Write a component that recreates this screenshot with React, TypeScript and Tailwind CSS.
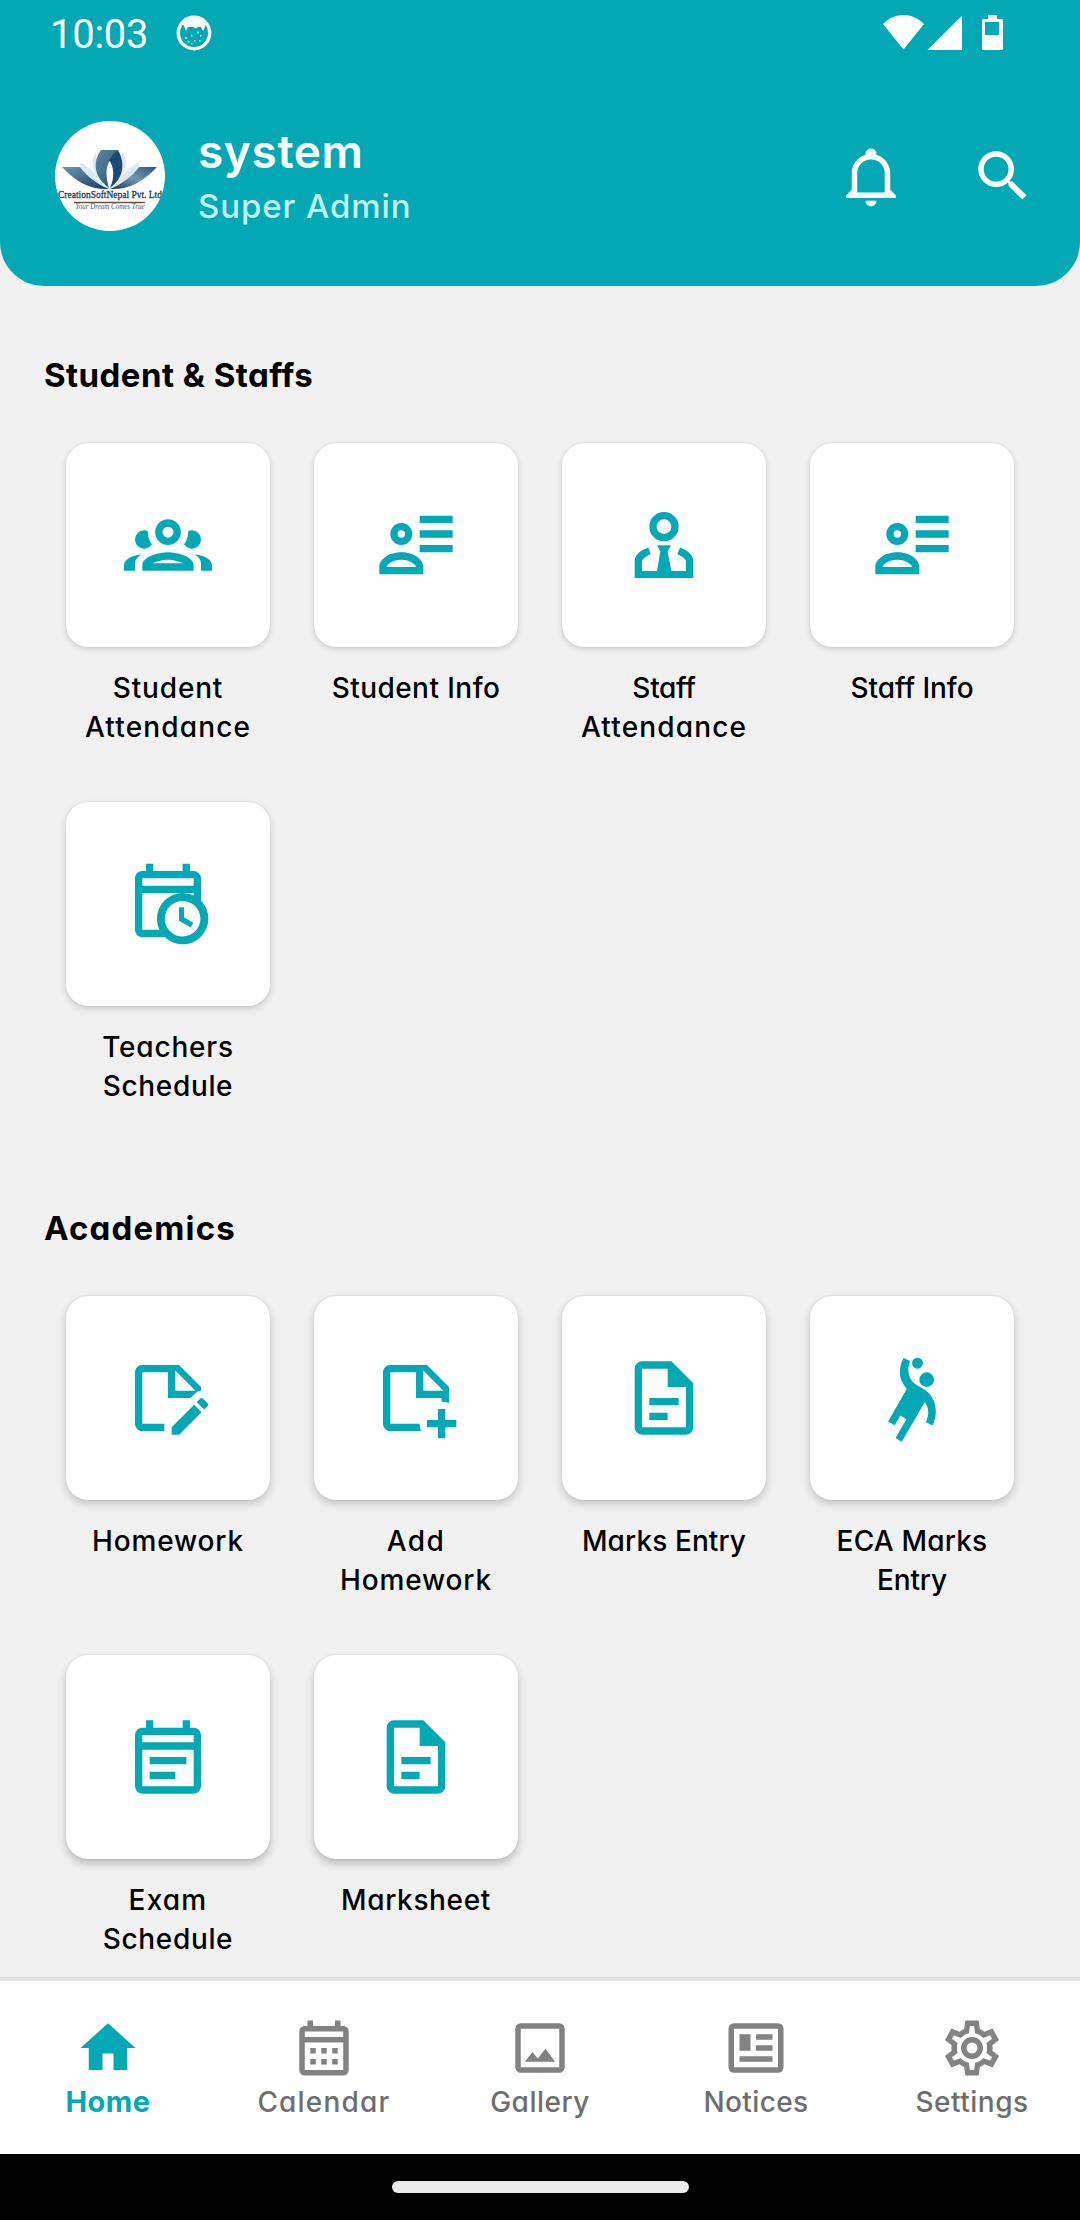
const icons = {
  accountGroup:
    "M12,5A3.5,3.5 0 0,0 8.5,8.5A3.5,3.5 0 0,0 12,12A3.5,3.5 0 0,0 15.5,8.5A3.5,3.5 0 0,0 12,5M12,7A1.5,1.5 0 0,1 13.5,8.5A1.5,1.5 0 0,1 12,10A1.5,1.5 0 0,1 10.5,8.5A1.5,1.5 0 0,1 12,7M5.5,8A2.5,2.5 0 0,0 3,10.5C3,11.44 3.53,12.25 4.29,12.68C4.65,12.88 5.06,13 5.5,13C5.94,13 6.35,12.88 6.71,12.68C7.08,12.47 7.39,12.17 7.62,11.81C6.89,10.86 6.5,9.7 6.5,8.5C6.5,8.41 6.5,8.31 6.5,8.22C6.2,8.08 5.86,8 5.5,8M18.5,8C18.14,8 17.8,8.08 17.5,8.22C17.5,8.31 17.5,8.41 17.5,8.5C17.5,9.7 17.11,10.86 16.38,11.81C16.5,12 16.63,12.15 16.78,12.3C16.94,12.45 17.1,12.58 17.29,12.68C17.65,12.88 18.06,13 18.5,13C18.94,13 19.35,12.88 19.71,12.68C20.47,12.25 21,11.44 21,10.5A2.5,2.5 0 0,0 18.5,8M12,14C9.66,14 5,15.17 5,17.5V19H19V17.5C19,15.17 14.34,14 12,14M4.71,14.55C2.78,14.78 0,15.76 0,17.5V19H3V17.07C3,16.06 3.69,15.22 4.71,14.55M19.29,14.55C20.31,15.22 21,16.06 21,17.07V19H24V17.5C24,15.76 21.22,14.78 19.29,14.55M12,16C13.53,16 15.24,16.5 16.23,17H7.77C8.76,16.5 10.47,16 12,16Z",
  accountDetails:
    "M13 4H22V6H13V4M13 8H22V10H13V8M13 12H22V14H13V12M8 6A3 3 0 0 0 8 12A3 3 0 0 0 8 6M8 8A1 1 0 0 1 8 10A1 1 0 0 1 8 8M8 14C4.67 14 2 15.9 2 18V20H14V18C14 15.9 11.33 14 8 14M4 18C4 17.42 5.6 16 8 16S12 17.42 12 18H4Z",
  accountTie:
    "M12 3A4 4 0 0 0 12 11A4 4 0 0 0 12 3M12 5A2 2 0 0 1 12 9A2 2 0 0 1 12 5M10.1 12.1H13.9L13 13.8L14 19.1H18V16.5C18 15.9 17.1 15.1 15.6 14.5L16.4 12.7C18.5 13.5 20 14.9 20 16.2V21H4V16.2C4 14.9 5.5 13.5 7.7 12.7L8.4 14.5C6.9 15.1 6 15.9 6 16.5V19.1H10.1L11 13.8Z",
  calendarClock:
    "M15 12.9H16.4V15.7L18.9 17.1L18.2 18.4L15 16.6V12.9M5 9V19H9.67C9.24 18.09 9 17.07 9 16A7 7 0 0 1 16 9H5M16 9C17.07 9 18.09 9.24 19 9.67V9H16M5 5V7H19V5H5M5 21C3.89 21 3 20.1 3 19V5C3 3.89 3.89 3 5 3H6V1H8V3H16V1H18V3H19A2 2 0 0 1 21 5V11.1C22.24 12.36 23 14.09 23 16A7 7 0 0 1 16 23C14.09 23 12.36 22.24 11.1 21H5M16 11.15A4.85 4.85 0 0 0 11.15 16C11.15 18.68 13.32 20.85 16 20.85A4.85 4.85 0 0 0 20.85 16C20.85 13.32 18.68 11.15 16 11.15Z",
  noteEdit:
    "M18.13 12L19.39 10.74C19.83 10.3 20.39 10.06 21 10V9L15 3H5C3.89 3 3 3.89 3 5V19C3 20.1 3.89 21 5 21H11V19.13L11.13 19H5V5H12V12H18.13M14 4.5L19.5 10H14V4.5M19.13 13.83L21.17 15.87L15.04 22H13V19.96L19.13 13.83M22.85 14.19L21.87 15.17L19.83 13.13L20.81 12.15C21 11.95 21.33 11.95 21.53 12.15L22.85 13.47C23.05 13.67 23.05 14 22.85 14.19Z",
  notePlus:
    "M19 13C19.7 13 20.37 13.13 21 13.35V9L15 3H5C3.89 3 3 3.89 3 5V19C3 20.11 3.9 21 5 21H13.35C13.13 20.37 13 19.7 13 19H5V5H12V12H19V13M14 4.5L19.5 10H14V4.5M20 15V18H23V20H20V23H18V20H15V18H18V15H20Z",
  document:
    "M6 2A2 2 0 0 0 4 4V20A2 2 0 0 0 6 22H18A2 2 0 0 0 20 20V8L14 2H6M6 4H13V9H18V20H6V4M8 12V14H16V12H8M8 16V18H13V16H8Z",
  handball:
    "M13.5 1A1.5 1.5 0 0 1 13.5 4A1.5 1.5 0 0 1 13.5 1M16 5A2 2 0 0 1 16 9A2 2 0 0 1 16 5M9.7 1.1L11.5 1.9C11.1 2.8 11 3.6 11 4.5C11.1 6.8 12.3 8.1 14.6 9.2C17.1 10.5 18.5 12.8 18.5 15.6C18.5 17 18.2 18.3 17.6 19.5L15.8 18.6C16.7 16.7 16.7 15 15.5 13.1L9.2 23.9L7.5 22.9L10.5 17.8L8.8 16.8L7.3 19.4L5.5 18.4L10.6 9.5C9.3 8.1 8.7 6.7 8.7 4.8C8.7 3.5 9.1 2.2 9.7 1.1Z",
  calendarText:
    "M19 4H18V2H16V4H8V2H6V4H5A2 2 0 0 0 3 6V20A2 2 0 0 0 5 22H19A2 2 0 0 0 21 20V6A2 2 0 0 0 19 4M19 20H5V10H19V20M19 8H5V6H19V8M7 12H17V14H7V12M7 16H14V18H7V16Z",
  bell:
    "M10 21H14C14 22.1 13.1 23 12 23S10 22.1 10 21M21 19V20H3V19L5 17V11C5 7.9 7 5.2 10 4.3V4C10 2.9 10.9 2 12 2S14 2.9 14 4V4.3C17 5.2 19 7.9 19 11V17L21 19M17 11C17 8.2 14.8 6 12 6S7 8.2 7 11V18H17V11Z",
  magnify:
    "M9.5,3A6.5,6.5 0 0,1 16,9.5C16,11.11 15.41,12.59 14.44,13.73L14.71,14H15.5L20.5,19L19,20.5L14,15.5V14.71L13.73,14.44C12.59,15.41 11.11,16 9.5,16A6.5,6.5 0 0,1 3,9.5A6.5,6.5 0 0,1 9.5,3M9.5,5C7,5 5,7 5,9.5C5,12 7,14 9.5,14C12,14 14,12 14,9.5C14,7 12,5 9.5,5Z",
  home: "M10,20V14H14V20H19V12H22L12,3L2,12H5V20H10Z",
  calendarMonth:
    "M19 4H18V2H16V4H8V2H6V4H5A2 2 0 0 0 3 6V20A2 2 0 0 0 5 22H19A2 2 0 0 0 21 20V6A2 2 0 0 0 19 4M19 20H5V10H19V20M19 8H5V6H19V8M7 12H9V14H7V12M11 12H13V14H11V12M15 12H17V14H15V12M7 16H9V18H7V16M11 16H13V18H11V16M15 16H17V18H15V16Z",
  image:
    "M19,19H5V5H19M19,3H5A2,2 0 0,0 3,5V19A2,2 0 0,0 5,21H19A2,2 0 0,0 21,19V5A2,2 0 0,0 19,3M13.96,12.29L11.21,15.83L9.25,13.47L6.5,17H17.5L13.96,12.29Z",
  newspaper:
    "M4 3A2 2 0 0 0 2 5V19A2 2 0 0 0 4 21H20A2 2 0 0 0 22 19V5A2 2 0 0 0 20 3H4M4 5H20V19H4V5M6 7V13H10V7H6M12 7V9H18V7H12M12 11V13H18V11H12M6 15V17H18V15H6Z",
  cog:
    "M12,8A4,4 0 0,1 16,12A4,4 0 0,1 12,16A4,4 0 0,1 8,12A4,4 0 0,1 12,8M12,10A2,2 0 0,0 10,12A2,2 0 0,0 12,14A2,2 0 0,0 14,12A2,2 0 0,0 12,10M9.6,22L9.13,18.93C8.5,18.68 7.96,18.34 7.44,17.94L4.55,19.1L2.15,14.95L4.57,12.97L4.5,12L4.57,11L2.15,9.05L4.55,4.9L7.44,6.05C7.96,5.66 8.5,5.32 9.13,5.07L9.6,2H14.4L14.87,5.07C15.5,5.32 16.04,5.66 16.56,6.05L19.45,4.9L21.85,9.05L19.43,11L19.5,12L19.43,13L21.85,14.95L19.45,19.1L16.56,17.95C16.04,18.34 15.5,18.68 14.87,18.93L14.4,22H9.6M11.25,4L10.88,6.61C9.68,6.86 8.62,7.5 7.85,8.39L5.44,7.35L4.69,8.65L6.8,10.2C6.4,11.37 6.4,12.64 6.8,13.8L4.68,15.36L5.43,16.66L7.86,15.62C8.63,16.5 9.68,17.14 10.87,17.38L11.24,20H12.76L13.13,17.39C14.32,17.14 15.37,16.5 16.14,15.62L18.57,16.66L19.32,15.36L17.2,13.81C17.6,12.64 17.6,11.37 17.2,10.2L19.31,8.65L18.56,7.35L16.15,8.39C15.38,7.5 14.32,6.86 13.12,6.62L12.75,4H11.25Z",
};

type IconName = keyof typeof icons;
type Line = { text: string; tracking: string };
type Tile = { icon: IconName; label: Line[] };
type Section = { title: string; tracking: string; rows: { shadow: string; tiles: Tile[] }[] };

const sections: Section[] = [
  {
    title: "Student & Staffs",
    tracking: "tracking-[0.45px]",
    rows: [
      {
        shadow: "shadow-[0_2px_6px_rgba(0,0,0,0.14),0_0_2px_rgba(0,0,0,0.12)]",
        tiles: [
          { icon: "accountGroup", label: [{ text: "Student", tracking: "tracking-[0.82px]" }, { text: "Attendance", tracking: "tracking-[1.15px]" }] },
          { icon: "accountDetails", label: [{ text: "Student Info", tracking: "tracking-[0.45px]" }] },
          { icon: "accountTie", label: [{ text: "Staff", tracking: "tracking-[-0.3px]" }, { text: "Attendance", tracking: "tracking-[1.15px]" }] },
          { icon: "accountDetails", label: [{ text: "Staff Info", tracking: "tracking-[-0.05px]" }] },
        ],
      },
      {
        shadow: "shadow-[0_3px_7px_rgba(0,0,0,0.17),0_0_2px_rgba(0,0,0,0.12)]",
        tiles: [
          { icon: "calendarClock", label: [{ text: "Teachers", tracking: "tracking-[0.8px]" }, { text: "Schedule", tracking: "tracking-[0.65px]" }] },
        ],
      },
    ],
  },
  {
    title: "Academics",
    tracking: "tracking-[1.15px]",
    rows: [
      {
        shadow: "shadow-[0_4px_8px_rgba(0,0,0,0.19),0_0_2px_rgba(0,0,0,0.12)]",
        tiles: [
          { icon: "noteEdit", label: [{ text: "Homework", tracking: "tracking-[0.82px]" }] },
          { icon: "notePlus", label: [{ text: "Add", tracking: "tracking-[1.5px]" }, { text: "Homework", tracking: "tracking-[0.82px]" }] },
          { icon: "document", label: [{ text: "Marks Entry", tracking: "tracking-[0.1px]" }] },
          { icon: "handball", label: [{ text: "ECA Marks", tracking: "tracking-[0.2px]" }, { text: "Entry", tracking: "tracking-[-0.13px]" }] },
        ],
      },
      {
        shadow: "shadow-[0_5px_9px_rgba(0,0,0,0.22),0_0_2px_rgba(0,0,0,0.12)]",
        tiles: [
          { icon: "calendarText", label: [{ text: "Exam", tracking: "tracking-[1.2px]" }, { text: "Schedule", tracking: "tracking-[0.65px]" }] },
          { icon: "document", label: [{ text: "Marksheet", tracking: "tracking-[0.65px]" }] },
        ],
      },
    ],
  },
];

const tabs: { icon: IconName; label: string; tracking: string; active?: boolean }[] = [
  { icon: "home", label: "Home", tracking: "tracking-[0.5px]", active: true },
  { icon: "calendarMonth", label: "Calendar", tracking: "tracking-[1.2px]" },
  { icon: "image", label: "Gallery", tracking: "tracking-[0.5px]" },
  { icon: "newspaper", label: "Notices", tracking: "tracking-[0.39px]" },
  { icon: "cog", label: "Settings", tracking: "tracking-[0.5px]" },
];

function Icon({ name, className }: { name: IconName; className: string }) {
  return (
    <svg viewBox="0 0 24 24" className={className} fill="currentColor" fillRule="evenodd" aria-hidden="true">
      <path d={icons[name]} />
    </svg>
  );
}

function CompanyLogo() {
  return (
    <svg viewBox="0 0 110 110" className="size-[110px] shrink-0 rounded-full bg-white">
      <defs>
        <linearGradient id="leafLeft" x1="0" y1="0" x2="1" y2="1">
          <stop offset="0" stopColor="#6f97b1" />
          <stop offset="1" stopColor="#17395e" />
        </linearGradient>
        <linearGradient id="leafRight" x1="1" y1="0" x2="0" y2="1">
          <stop offset="0" stopColor="#2b577c" />
          <stop offset="0.5" stopColor="#7196ae" />
          <stop offset="1" stopColor="#17395e" />
        </linearGradient>
        <linearGradient id="petal" x1="0" y1="0" x2="1" y2="1">
          <stop offset="0" stopColor="#5c87a3" />
          <stop offset="1" stopColor="#2a5478" />
        </linearGradient>
      </defs>
      <path d="M24 42C33 43 39 52 54 68C43 63 29 55 24 42M85 42C76 43 70 52 55 68C66 63 80 55 85 42M41 31C35 39 36 52 52 67L42 45M67 31C74 39 73 52 57 67L67 45" fill="#dce9f3" />
      <path d="M7 46H25C31 54 40 62 54 68C34 69 20 60 7 46Z" fill="url(#leafLeft)" />
      <path d="M102 46H84C78 54 69 62 55 68C75 69 89 60 102 46Z" fill="url(#leafRight)" />
      <path d="M46 29H63C55 37 49 49 54 67C41 58 36 43 46 29Z" fill="url(#petal)" />
      <path d="M63 29C71 43 68 58 55 67C60 56 59 46 54 39C57 35 60 31 63 29Z" fill="#1d4a72" />
      <path d="M54.5 40C50 47 51 58 54.5 66C58 58 59 47 54.5 40Z" fill="#fff" />
      <text x="3" y="77" textLength="104" lengthAdjust="spacingAndGlyphs" fill="#17395e" stroke="#17395e" strokeWidth="0.3" className="font-['Liberation_Serif'] text-[11px]">
        CreationSoftNepal Pvt. Ltd
      </text>
      <path d="M19 81.5H90" stroke="#6b5148" strokeWidth="1.3" />
      <text x="20.5" y="88" textLength="69" lengthAdjust="spacingAndGlyphs" fill="#3a587a" className="font-['Liberation_Serif'] text-[7.5px] italic">
        Your Dream Comes True
      </text>
    </svg>
  );
}

function StatusBar() {
  return (
    <div className="flex h-10 items-start pl-[50px] pr-[77px] text-white">
      <span className="font-['Roboto'] text-[40px] leading-10 tracking-[-0.28px]">10:03</span>
      <svg viewBox="0 0 36 36" className="ml-[28px] size-9">
        <circle cx="18" cy="18" r="15.7" fill="none" stroke="currentColor" strokeWidth="3.4" />
        <path d="M6 8C11 1 25 1 30 8L29 12L27 16L25 12H22L20 13.5L17 12H12L10 16L8 11Z" fill="currentColor" />
        <path d="M9 22h2v2H9zM15 20h1.5v1.5H15zM21 16.5h2v2h-2zM24 20h1.5v1.5H24zM12 26h1.5v1.5H12zM18 25h1.5v1.5H18zM15 28h1.5v1.5H15zM23 25h1.5v1.5H23z" fill="currentColor" opacity="0.7" />
      </svg>
      <div className="ml-auto flex" aria-hidden="true">
        <svg viewBox="0 0 41 36" className="h-9 w-[41px]" fill="currentColor">
          <path d="M0 9C12-3 29-3 41 9L20.5 34.5Z" />
        </svg>
        <svg viewBox="0 0 35 36" className="ml-[3px] h-9 w-[35px]" fill="currentColor">
          <path d="M35 .7V35H.5Z" />
        </svg>
        <svg viewBox="0 0 21 36" className="ml-5 h-9 w-[21px]" fill="currentColor" fillRule="evenodd">
          <path d="M6 0H15V4H19.5Q21 4 21 5.5V33.5Q21 35 19.5 35H1.5Q0 35 0 33.5V5.5Q0 4 1.5 4H6ZM3 7V20H17V7Z" />
        </svg>
      </div>
    </div>
  );
}

function Header() {
  return (
    <header className="h-[286px] rounded-b-[44px] bg-[#02a8b3] pt-[15px] text-white">
      <StatusBar />
      <div className="mt-[66px] flex items-start pl-[55px] pr-[44px]">
        <CompanyLogo />
        <div className="ml-[33px] mt-[3px]">
          <h1 className="text-[46px] font-semibold leading-[54px] tracking-[0.6px]">system</h1>
          <p className="mt-1.5 text-[33px] font-medium leading-[44px] tracking-[0.9px] text-[#bff1f5]">Super Admin</p>
        </div>
        <div className="ml-auto mt-[22px] flex gap-[66px]">
          <Icon name="bell" className="size-[66px]" />
          <Icon name="magnify" className="size-[66px]" />
        </div>
      </div>
    </header>
  );
}

function TileCard({ tile, shadow }: { tile: Tile; shadow: string }) {
  return (
    <div className="w-[204px] text-center">
      <div className={`grid size-[204px] place-items-center rounded-[22px] bg-white ${shadow}`}>
        <Icon name={tile.icon} className="size-[88px] text-[#02a8b3]" />
      </div>
      <p className="mt-[22px] h-[77px] text-[28px] font-medium leading-[39px]">
        {tile.label.map((line) => (
          <span key={line.text} className={`block whitespace-nowrap ${line.tracking}`}>{line.text}</span>
        ))}
      </p>
    </div>
  );
}

function TabBar() {
  return (
    <nav className="mt-auto grid h-[177px] shrink-0 grid-cols-5 border-t-4 border-[#e4e4e4] bg-white pt-[34px]">
      {tabs.map((tab) => (
        <div key={tab.label} className="flex flex-col items-center">
          <Icon name={tab.icon} className={tab.active ? "size-[66px] text-[#02a8b3]" : "size-[66px] text-[#828282]"} />
          <span className={`mt-[3px] leading-9 ${tab.tracking} ${tab.active ? "text-[29px] font-bold text-[#02a8b3]" : "text-[28px] font-medium text-[#6e6e6e]"}`}>
            {tab.label}
          </span>
        </div>
      ))}
    </nav>
  );
}

export default function App() {
  return (
    <main className="flex h-[2220px] w-[1080px] flex-col overflow-hidden bg-[#f1f1f1] font-['Inter',sans-serif] text-black [font-feature-settings:'cv11']">
      <Header />

      <div className="flex flex-col gap-[99px] pt-[65px]">
        {sections.map((section) => (
          <section key={section.title}>
            <h2 className={`pl-11 text-[33px] font-bold leading-[48px] ${section.tracking}`}>{section.title}</h2>
            <div className="mt-11 flex flex-col gap-14 pl-[66px]">
              {section.rows.map((row) => (
                <div key={row.tiles[0].icon} className="flex gap-11">
                  {row.tiles.map((tile) => (
                    <TileCard key={tile.label.map((line) => line.text).join(" ")} tile={tile} shadow={row.shadow} />
                  ))}
                </div>
              ))}
            </div>
          </section>
        ))}
      </div>

      <TabBar />
      <div className="flex h-[66px] shrink-0 items-center justify-center bg-black">
        <div className="h-3 w-[297px] rounded-full bg-[#ebebeb]" />
      </div>
    </main>
  );
}
